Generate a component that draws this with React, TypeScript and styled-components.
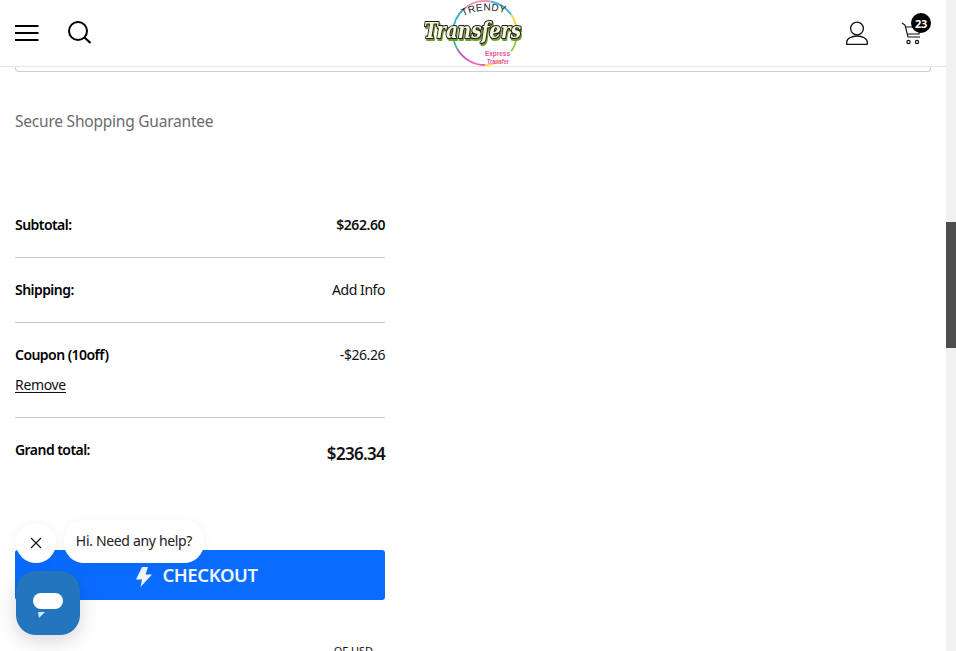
import React from "react";
import styled, { createGlobalStyle } from "styled-components";

const Global = createGlobalStyle`
  html, body { margin: 0; padding: 0; height: 100%; overflow: hidden; background: #fff; }
  #root { height: 100%; }
  * { box-sizing: border-box; }
`;

const FONT = `"Noto Sans", "Open Sans", "Liberation Sans", sans-serif`;

const Viewport = styled.div`
  position: relative;
  width: 956px;
  height: 651px;
  overflow: hidden;
  display: flex;
  font-family: ${FONT};
  color: #000;
`;

const Page = styled.div`
  width: 946px;
  height: 651px;
  display: flex;
  flex-direction: column;
  overflow: hidden;
`;

const Scrollbar = styled.div`
  width: 10px;
  height: 651px;
  background: #f1f1f1;
  padding-top: 222px;
`;

const Thumb = styled.div`
  height: 126px;
  background: #4d4d4d;
`;

const Header = styled.header`
  height: 67px;
  flex: none;
  background: #fff;
  border-bottom: 1px solid #e6e6e6;
  display: grid;
  grid-template-columns: 1fr auto 1fr;
  align-items: center;
  padding: 0 15px;
  position: relative;
  z-index: 1;
`;

const HeaderLeft = styled.div`
  display: flex;
  align-items: center;
  gap: 29px;
`;

const HeaderRight = styled.div`
  display: flex;
  align-items: center;
  justify-content: flex-end;
  gap: 32px;
  padding-right: 9px;
`;

const LogoSvg = styled.svg`
  display: block;
  width: 100px;
  height: 66px;
  margin-left: -2px;
`;

const LogoWord = styled.text`
  font-family: "DejaVu Serif", "Liberation Serif", serif;
  font-style: italic;
  font-weight: 700;
  font-size: 22px;
  fill: #f6f4dc;
  stroke: #1c1c1c;
  stroke-width: 2.2px;
  paint-order: stroke;
  stroke-linejoin: round;
  filter: drop-shadow(1px 2px 0 #6f9a2c);
`;

const LogoTop = styled.text`
  font-family: "Liberation Sans", sans-serif;
  font-size: 10px;
  letter-spacing: 0.4px;
  fill: #222;
`;

const LogoSmall = styled.text`
  font-family: "Liberation Sans", sans-serif;
  font-size: 8px;
  font-weight: 700;
  fill: #ee4fa0;
`;

const CartWrap = styled.div`
  position: relative;
  width: 22px;
  height: 26px;
`;

const Badge = styled.span`
  position: absolute;
  left: 11px;
  top: -7px;
  width: 20px;
  height: 20px;
  border-radius: 50%;
  background: #000;
  color: #fff;
  font-size: 11px;
  font-weight: 700;
  display: flex;
  align-items: center;
  justify-content: center;
  letter-spacing: -0.3px;
`;

const Content = styled.main`
  padding: 0 15px;
  margin-top: -1px;
`;

const TopBox = styled.div`
  width: 916px;
  height: 6px;
  border: 1px solid #cfcfcf;
  border-top: none;
  border-radius: 0 0 4px 4px;
`;

const Guarantee = styled.p`
  margin: 37px 0 0;
  font-size: 15.5px;
  line-height: 24px;
  color: #6b6b6b;
  letter-spacing: -0.22px;
`;

const Summary = styled.section`
  width: 370px;
  margin-top: 60px;
`;

const Row = styled.div<{ $last?: boolean }>`
  border-bottom: ${(p) => (p.$last ? "none" : "1px solid #cbcbcb")};
  padding: 23px 0 24px;
`;

const RowLine = styled.div`
  display: flex;
  justify-content: space-between;
  align-items: center;
  height: 17px;
`;

const Label = styled.span`
  font-size: 14px;
  font-weight: 600;
  letter-spacing: -0.55px;
`;

const Value = styled.span<{ $strong?: boolean; $large?: boolean }>`
  font-size: ${(p) => (p.$large ? "17px" : "14px")};
  font-weight: ${(p) => (p.$strong ? 600 : 400)};
  letter-spacing: ${(p) => (p.$large ? "-0.7px" : "-0.45px")};
  margin-top: ${(p) => (p.$large ? "8px" : "0")};
  color: #111;
`;

const RemoveLink = styled.a`
  display: block;
  margin-top: 14px;
  font-size: 14px;
  line-height: 16px;
  letter-spacing: -0.33px;
  color: #111;
  text-decoration: underline;
  text-underline-offset: 2px;
`;

const Checkout = styled.button`
  width: 370px;
  height: 50px;
  margin-top: 68px;
  border: none;
  border-radius: 3px;
  background: #0a6cff;
  color: #eef5ff;
  font-family: ${FONT};
  font-size: 18.5px;
  font-weight: 600;
  letter-spacing: -0.4px;
  display: flex;
  align-items: center;
  justify-content: center;
  gap: 10px;
  padding: 0 6px 2px 0;
`;

const BoltSvg = styled.svg`
  width: 16px;
  height: 20px;
  margin-top: 6px;
`;

const Clipped = styled.div`
  width: 370px;
  margin-top: 44px;
  text-align: right;
  padding-right: 12px;
  font-size: 11px;
  line-height: 14px;
  color: #111;
`;

const CloseBubble = styled.button`
  position: absolute;
  left: 16px;
  top: 523px;
  width: 40px;
  height: 40px;
  border: none;
  padding: 0;
  border-radius: 50%;
  background: #fff;
  display: flex;
  align-items: center;
  justify-content: center;
  box-shadow: 0 2px 12px rgba(0, 0, 0, 0.06);
`;

const HelpBubble = styled.div`
  position: absolute;
  left: 64px;
  top: 520px;
  width: 140px;
  height: 43px;
  border-radius: 20px;
  background: #fff;
  font-size: 14px;
  letter-spacing: -0.33px;
  color: #222;
  display: flex;
  align-items: center;
  justify-content: center;
  padding-bottom: 2px;
  box-shadow: 0 2px 12px rgba(0, 0, 0, 0.06);
`;

const ChatButton = styled.div`
  position: absolute;
  left: 16px;
  top: 571px;
  width: 64px;
  height: 64px;
  border-radius: 20px;
  background: #2376bd;
  display: flex;
  align-items: center;
  justify-content: center;
  padding-top: 5px;
  box-shadow: 0 6px 20px rgba(0, 0, 0, 0.16);
`;

const Menu = () => (
  <svg width="24" height="18" viewBox="0 0 24 18" aria-hidden>
    <path d="M0 2h23.5M0 9h23.5M0 16h23.5" stroke="#000" strokeWidth="2.2" fill="none" />
  </svg>
);

const Search = () => (
  <svg width="24" height="24" viewBox="0 0 24 24" aria-hidden>
    <circle cx="10" cy="10" r="9" stroke="#000" strokeWidth="2" fill="none" />
    <path d="M16.5 16.5l6 5.5" stroke="#000" strokeWidth="2.2" fill="none" />
  </svg>
);

const User = () => (
  <svg width="22" height="24" viewBox="0 0 22 24" fill="none" stroke="#111" strokeWidth="1.3" aria-hidden>
    <circle cx="11" cy="7.5" r="6.4" />
    <path d="M.7 23.3v-2C.7 17.6 5.5 15 11 15s10.3 2.6 10.3 6.3v2z" strokeLinejoin="round" />
  </svg>
);

const Cart = () => (
  <svg width="22" height="26" viewBox="0 0 22 26" fill="none" stroke="#111" strokeWidth="1.2" aria-hidden>
    <path d="M2 3l3 2 3 12h12" />
    <path d="M6 7h14l-1 7H7.5" />
    <circle cx="8.5" cy="22" r="1.6" />
    <circle cx="17" cy="22" r="1.6" />
  </svg>
);

const Bolt = () => (
  <BoltSvg viewBox="0 0 16 20" aria-hidden>
    <path d="M6 0L0 12.5h6L4.5 20 16 7.5H9.5L12 0z" fill="#eef5ff" />
  </BoltSvg>
);

const Close = () => (
  <svg width="12" height="12" viewBox="0 0 12 12" aria-hidden>
    <path d="M1 1l10 10M11 1L1 11" stroke="#111" strokeWidth="1.1" fill="none" />
  </svg>
);

const ChatIcon = () => (
  <svg width="30" height="25" viewBox="0 0 30 25" aria-hidden>
    <rect x="0" y="0" width="30" height="16" rx="8" fill="#fff" />
    <path d="M5 19h7l-6 6z" fill="#cfe6fb" />
  </svg>
);

const RING: [number, number, string][] = [
  [-80, -35, "#3fb6e6"],
  [-35, 5, "#f3d52f"],
  [5, 35, "#8fcb45"],
  [-180, -130, "#2fb3c9"],
  [120, 150, "#b45cc9"],
  [90, 120, "#ef5fb3"],
  [60, 90, "#f6e23c"],
  [150, 180, "#3fb6a0"],
  [-130, -80, "#ef8fb0"],
];

const arc = (from: number, to: number) => {
  const r = 32;
  const pt = (a: number) => {
    const t = (a * Math.PI) / 180;
    return `${(63 + r * Math.cos(t)).toFixed(2)} ${(33 + r * Math.sin(t)).toFixed(2)}`;
  };
  return `M${pt(from)}A${r} ${r} 0 0 1 ${pt(to)}`;
};

const Logo = () => (
  <LogoSvg viewBox="0 0 100 66" aria-label="Trendy Transfers">
    {RING.map(([a, b, c]) => (
      <path key={a} d={arc(a, b)} stroke={c} strokeWidth="1.8" fill="none" />
    ))}
    <path id="logo-arch" d="M41 16Q62 6 86 14" fill="none" />
    <LogoTop>
      <textPath href="#logo-arch">TRENDY</textPath>
    </LogoTop>
    <LogoWord x="2" y="38" textLength="97" lengthAdjust="spacingAndGlyphs">Transfers</LogoWord>
    <LogoSmall x="63" y="56" textLength="25" lengthAdjust="spacingAndGlyphs">Express</LogoSmall>
    <LogoSmall x="65" y="64" textLength="22" lengthAdjust="spacingAndGlyphs">Transfer</LogoSmall>
  </LogoSvg>
);

export default function App() {
  return (
    <Viewport>
      <Global />
      <Page>
        <Header>
          <HeaderLeft>
            <Menu />
            <Search />
          </HeaderLeft>
          <Logo />
          <HeaderRight>
            <User />
            <CartWrap>
              <Cart />
              <Badge>23</Badge>
            </CartWrap>
          </HeaderRight>
        </Header>
        <Content>
          <TopBox />
          <Guarantee>Secure Shopping Guarantee</Guarantee>
          <Summary>
            <Row>
              <RowLine>
                <Label>Subtotal:</Label>
                <Value $strong>$262.60</Value>
              </RowLine>
            </Row>
            <Row>
              <RowLine>
                <Label>Shipping:</Label>
                <Value>Add Info</Value>
              </RowLine>
            </Row>
            <Row>
              <RowLine>
                <Label>Coupon (10off)</Label>
                <Value>-$26.26</Value>
              </RowLine>
              <RemoveLink>Remove</RemoveLink>
            </Row>
            <Row $last>
              <RowLine>
                <Label>Grand total:</Label>
                <Value $strong $large>$236.34</Value>
              </RowLine>
            </Row>
            <Checkout>
              <Bolt />
              CHECKOUT
            </Checkout>
            <Clipped>OF USD</Clipped>
          </Summary>
        </Content>
      </Page>
      <Scrollbar>
        <Thumb />
      </Scrollbar>
      <CloseBubble>
        <Close />
      </CloseBubble>
      <HelpBubble>Hi. Need any help?</HelpBubble>
      <ChatButton>
        <ChatIcon />
      </ChatButton>
    </Viewport>
  );
}
